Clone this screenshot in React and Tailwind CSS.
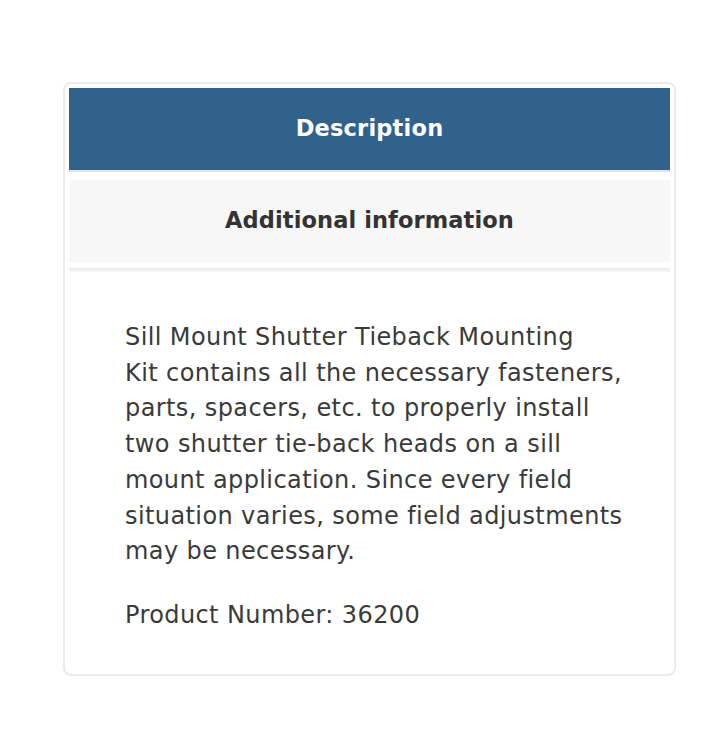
const lines = [
  "Sill Mount Shutter Tieback Mounting",
  "Kit contains all the necessary fasteners,",
  "parts, spacers, etc. to properly install",
  "two shutter tie-back heads on a sill",
  "mount application. Since every field",
  "situation varies, some field adjustments",
  "may be necessary.",
];

export default function App() {
  return (
    <div className="min-h-[745px] w-[702px] bg-white pt-[82px] pl-[63px]" style={{ fontFamily: '"DejaVu Sans", "Noto Sans", sans-serif' }}>
      <div className="w-[613px] h-[594px] rounded-[8px] border-2 border-[#ebebeb] p-[4px] flex flex-col">
        <div className="h-[84px] bg-[#30628b] border-b-2 border-[#dfe7ee] flex items-center justify-center">
          <span className="text-white font-bold text-[22.5px] tracking-[0.2px]">Description</span>
        </div>
        <div className="mt-[8px] h-[82px] bg-[#f7f7f7] flex items-center justify-center">
          <span className="text-[#333333] font-bold text-[22.5px] tracking-[0.1px]">Additional information</span>
        </div>
        <div className="mt-[6px] h-[4px] bg-gradient-to-b from-[#e9e9e9] to-[#f8f8f8]"></div>
        <div className="pt-[48px] pl-[56px] pr-[30px] text-[#3a3a3a] text-[24px] leading-[35.7px] tracking-[0.4px]">
          <p>
            {lines.map((l, i) => (
              <span key={i} className="block whitespace-nowrap">{l}</span>
            ))}
          </p>
          <p className="mt-[28px]">Product Number: 36200</p>
        </div>
      </div>
    </div>
  );
}
